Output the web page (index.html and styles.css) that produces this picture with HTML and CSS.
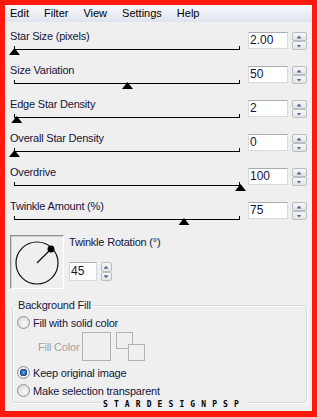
FILE: index.html
```html
<!DOCTYPE html>
<html>
<head>
    <meta charset="utf-8">
    <link rel="stylesheet" href="styles.css">
    <title>Star Effects</title>
</head>
<body>
    <div class="window">
        <div class="menubar">
            <span>Edit</span>
            <span>Filter</span>
            <span>View</span>
            <span>Settings</span>
            <span>Help</span>
        </div>

        <div class="content">
            <div class="row">
                <div class="control">
                    <div class="label">Star Size (pixels)</div>
                    <div class="track"><span class="thumb" style="left: 0%"></span></div>
                </div>
                <div class="spin">
                    <div class="field">2.00</div>
                    <div class="arrows"><span class="up"></span><span class="down"></span></div>
                </div>
            </div>

            <div class="row">
                <div class="control">
                    <div class="label">Size Variation</div>
                    <div class="track"><span class="thumb" style="left: 50%"></span></div>
                </div>
                <div class="spin">
                    <div class="field">50</div>
                    <div class="arrows"><span class="up"></span><span class="down"></span></div>
                </div>
            </div>

            <div class="row">
                <div class="control">
                    <div class="label">Edge Star Density</div>
                    <div class="track"><span class="thumb" style="left: 1%"></span></div>
                </div>
                <div class="spin">
                    <div class="field">2</div>
                    <div class="arrows"><span class="up"></span><span class="down"></span></div>
                </div>
            </div>

            <div class="row">
                <div class="control">
                    <div class="label">Overall Star Density</div>
                    <div class="track"><span class="thumb" style="left: 0%"></span></div>
                </div>
                <div class="spin">
                    <div class="field">0</div>
                    <div class="arrows"><span class="up"></span><span class="down"></span></div>
                </div>
            </div>

            <div class="row">
                <div class="control">
                    <div class="label">Overdrive</div>
                    <div class="track"><span class="thumb" style="left: 100%"></span></div>
                </div>
                <div class="spin">
                    <div class="field">100</div>
                    <div class="arrows"><span class="up"></span><span class="down"></span></div>
                </div>
            </div>

            <div class="row">
                <div class="control">
                    <div class="label">Twinkle Amount (%)</div>
                    <div class="track"><span class="thumb" style="left: 75%"></span></div>
                </div>
                <div class="spin">
                    <div class="field">75</div>
                    <div class="arrows"><span class="up"></span><span class="down"></span></div>
                </div>
            </div>

            <div class="rotation">
                <div class="dial">
                    <svg width="52" height="52" viewBox="0 0 52 52">
                        <circle cx="26" cy="27" r="21" fill="none" stroke="#111" stroke-width="1.2"/>
                        <line x1="26" y1="27" x2="40" y2="13" stroke="#111" stroke-width="1.2"/>
                        <circle cx="40" cy="13" r="3.5" fill="#000"/>
                    </svg>
                </div>
                <div class="rotation-side">
                    <div class="label">Twinkle Rotation (°)</div>
                    <div class="spin small">
                        <div class="field">45</div>
                        <div class="arrows"><span class="up"></span><span class="down"></span></div>
                    </div>
                </div>
            </div>

            <fieldset class="group">
                <legend>Background Fill</legend>
                <div class="option">
                    <span class="radio"></span>
                    <span>Fill with solid color</span>
                </div>
                <div class="fill">
                    <span class="fill-label">Fill Color</span>
                    <span class="swatch"></span>
                    <span class="pair">
                        <span class="sq"></span>
                        <span class="sq sq-back"></span>
                    </span>
                </div>
                <div class="option second">
                    <span class="radio checked"></span>
                    <span>Keep original image</span>
                </div>
                <div class="option third">
                    <span class="radio"></span>
                    <span>Make selection transparent</span>
                </div>
                <div class="mark">STARDESIGNPSP</div>
            </fieldset>
        </div>
    </div>
</body>
</html>
```

FILE: styles.css
```css
body {
    margin: 0;
    padding: 0;
    background-color: #fc1a0c;
    font-family: "Liberation Sans", Arial, sans-serif;
    font-size: 11px;
}

.window {
    margin: 5px;
    width: 307px;
    height: 406px;
    background-color: #efefef;
    color: #16163c;
}

.menubar {
    display: flex;
    gap: 15px;
    height: 17px;
    padding-left: 5px;
    line-height: 17px;
    color: #000;
    background: linear-gradient(#f8f9fc, #dfe4ee);
}

.content {
    padding: 7px 5px 0 5px;
}

.label {
    height: 14px;
    line-height: 14px;
    letter-spacing: -0.2px;
    white-space: nowrap;
}

/* slider rows */

.row {
    display: flex;
    justify-content: space-between;
    height: 34px;
}

.control {
    flex: 1;
}

.track {
    position: relative;
    margin: 6px 0 0 4px;
    width: 226px;
    height: 1px;
    background-color: #000;
}

.track::before,
.track::after {
    content: "";
    position: absolute;
    top: -3px;
    width: 1px;
    height: 3px;
    background-color: #000;
}

.track::before {
    left: 0;
}

.track::after {
    right: 0;
}

.thumb {
    position: absolute;
    top: -1px;
    width: 11px;
    height: 7px;
    margin-left: -5px;
    background-color: #000;
    clip-path: polygon(50% 0, 100% 100%, 0 100%);
}

/* spin boxes */

.spin {
    display: flex;
    gap: 4px;
    margin-top: 3px;
}

.field {
    box-sizing: border-box;
    width: 40px;
    height: 17px;
    padding-left: 1px;
    border: 1px solid #d6dbe2;
    border-top-color: #a7abb2;
    background-color: #fff;
    line-height: 15px;
    font-size: 12px;
    color: #121240;
}

.arrows {
    display: flex;
    flex-direction: column;
    width: 15px;
    height: 18px;
}

.arrows span {
    position: relative;
    flex: 1;
    box-sizing: border-box;
    border: 1px solid #b9bdc5;
    border-radius: 2px;
    background: linear-gradient(#f7f7f7, #e3e3e3);
}

.arrows span::after {
    content: "";
    position: absolute;
    left: 50%;
    top: 50%;
    width: 5px;
    height: 3px;
    margin: -1px 0 0 -3px;
    background-color: #51659e;
}

.arrows .up::after {
    clip-path: polygon(50% 0, 100% 100%, 0 100%);
}

.arrows .down::after {
    clip-path: polygon(0 0, 100% 0, 50% 100%);
}

/* rotation */

.rotation {
    display: flex;
    gap: 5px;
    height: 54px;
    margin-top: 2px;
}

.dial {
    box-sizing: border-box;
    width: 54px;
    height: 54px;
    border: 1px solid #fff;
    border-top-color: #8d8d8d;
    border-left-color: #8d8d8d;
    box-shadow: inset 1px 1px 0 #cfcfcf;
}

.dial svg {
    display: block;
}

.spin.small {
    margin-top: 13px;
    gap: 4px;
}

.spin.small .field {
    width: 28px;
    height: 19px;
    line-height: 17px;
}

.spin.small .arrows {
    width: 11px;
    height: 19px;
}

/* background fill group */

.group {
    position: relative;
    margin: 9px 0 0 2px;
    padding: 3px 4px 4px 4px;
    border: 1px solid #d3d9e0;
    border-radius: 3px;
    box-shadow: inset 1px 1px 0 #fff, 1px 1px 0 #fff;
}

.group legend {
    padding: 0 1px;
    line-height: 14px;
    letter-spacing: -0.2px;
}

.option {
    display: flex;
    align-items: center;
    gap: 3px;
    height: 15px;
    letter-spacing: -0.2px;
}

.option.second {
    margin-top: 4px;
}

.option.third {
    margin-top: 3px;
}

.radio {
    box-sizing: border-box;
    width: 13px;
    height: 13px;
    border: 1px solid #8f9194;
    border-radius: 50%;
    background: radial-gradient(circle at 60% 60%, #fafafa, #d2d2d2);
}

.radio.checked {
    background: radial-gradient(circle, #6fb2f0 0, #2563ad 2.5px, #1b3f7a 3.5px, #f4f4f4 4px, #cfcfcf 100%);
}

.fill {
    display: flex;
    align-items: center;
    height: 29px;
    margin-top: 2px;
}

.fill-label {
    margin-left: 21px;
    width: 44px;
    color: #a2a2a2;
    letter-spacing: -0.2px;
}

.swatch {
    box-sizing: border-box;
    width: 29px;
    height: 29px;
    border: 1px solid #b3b3b3;
}

.pair {
    position: relative;
    align-self: flex-start;
    width: 29px;
    height: 29px;
    margin-left: 5px;
}

.sq {
    position: absolute;
    left: 0;
    top: 0;
    box-sizing: border-box;
    width: 17px;
    height: 17px;
    border: 1px solid #b3b3b3;
    background-color: #efefef;
}

.sq-back {
    left: 12px;
    top: 12px;
}

.mark {
    position: absolute;
    left: 88px;
    bottom: -6px;
    padding: 0 2px;
    background-color: #efefef;
    font-family: "DejaVu Sans Mono", monospace;
    font-weight: bold;
    font-size: 8px;
    line-height: 7px;
    letter-spacing: 6.1px;
    color: #000;
}
```
